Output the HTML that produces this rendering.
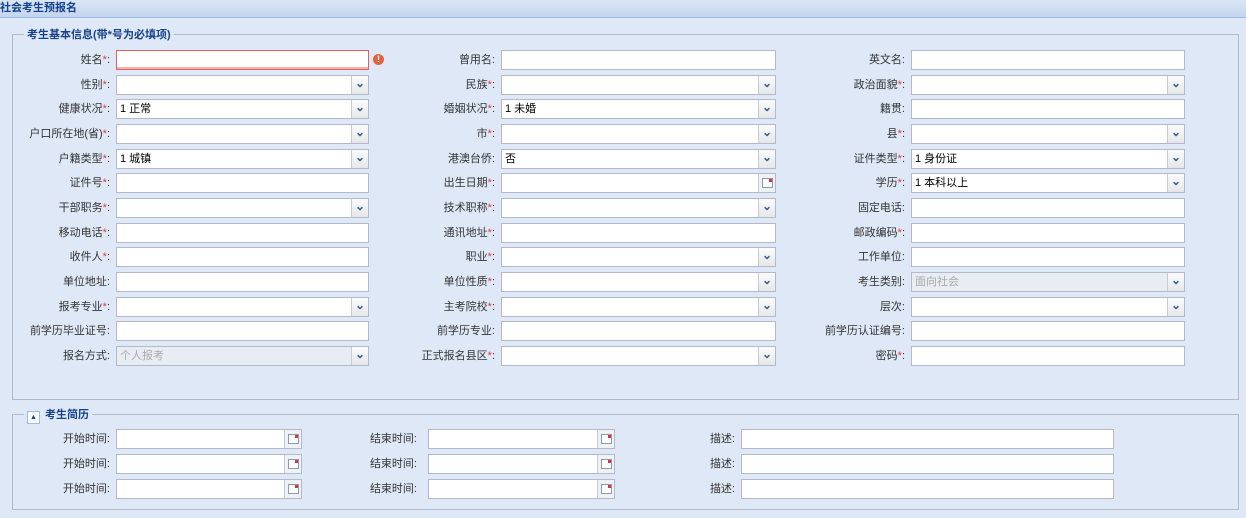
<!DOCTYPE html>
<html><head><meta charset="utf-8"><style>
body{margin:0;width:1246px;height:518px;background:#dfe8f6;font-family:"Liberation Sans","Noto Sans CJK SC",sans-serif;font-size:12px;color:#000;position:relative;overflow:hidden}
.hd{position:absolute;left:0;top:0;width:1246px;height:17px;background:linear-gradient(#dae6f4,#c3d6ef);border-bottom:1px solid #99bbe8;color:#15428b;font-weight:bold;font-size:11px;line-height:17px;padding-left:0}
.fs{position:absolute;border:1px solid #b5b8c8;}
.lg{position:absolute;background:#dfe8f6;color:#15428b;font-weight:bold;font-size:11px;padding:0 3px;line-height:14px}
.l{position:absolute;text-align:right;height:20px;line-height:20px;font-size:11px;color:#333}
.l i{font-style:normal;color:#e4393c}
.f{position:absolute;height:18px;border:1px solid #b5b8c8;background:#fff;line-height:18px;padding-left:3px;box-sizing:content-box;font-size:11px}
.tr{position:absolute;right:0;top:0;width:16px;height:18px;background:linear-gradient(#fbfbfb,#e5e7ea);border-left:1px solid #c8cbd2;color:#3a5d8f;font-size:12px;font-weight:bold;text-align:center;line-height:14px}
.d{color:#aaa;background:#e8edf4!important}
</style></head><body>
<div class="hd">社会考生预报名</div>
<div class="fs" style="left:12px;top:34px;width:1225px;height:364px"></div>
<div class="lg" style="left:24px;top:28px">考生基本信息(带*号为必填项)</div>
<div class="fs" style="left:12px;top:414px;width:1225px;height:94px"></div>
<div class="lg" style="left:24px;top:408px"><span style="display:inline-block;width:11px;height:11px;border:1px solid #99bbe8;background:#fff;font-size:7px;text-align:center;line-height:11px;vertical-align:-1px;margin-right:5px">▲</span>考生简历</div>

<div id="rows"></div>
<script>
var rows=[
[["姓名",1,"t","","err"],["曾用名",0,"t",""],["英文名",0,"t",""]],
[["性别",1,"c",""],["民族",1,"c",""],["政治面貌",1,"c",""]],
[["健康状况",1,"c","1 正常"],["婚姻状况",1,"c","1 未婚"],["籍贯",0,"t",""]],
[["户口所在地(省)",1,"c",""],["市",1,"c",""],["县",1,"c",""]],
[["户籍类型",1,"c","1 城镇"],["港澳台侨",0,"c","否"],["证件类型",1,"c","1 身份证"]],
[["证件号",1,"t",""],["出生日期",1,"d",""],["学历",1,"c","1 本科以上"]],
[["干部职务",1,"c",""],["技术职称",1,"c",""],["固定电话",0,"t",""]],
[["移动电话",1,"t",""],["通讯地址",1,"t",""],["邮政编码",1,"t",""]],
[["收件人",1,"t",""],["职业",1,"c",""],["工作单位",0,"t",""]],
[["单位地址",0,"t",""],["单位性质",1,"c",""],["考生类别",0,"c","面向社会","dis"]],
[["报考专业",1,"c",""],["主考院校",1,"c",""],["层次",0,"c",""]],
[["前学历毕业证号",0,"t",""],["前学历专业",0,"t",""],["前学历认证编号",0,"t",""]],
[["报名方式",0,"c","个人报考","dis"],["正式报名县区",1,"c",""],["密码",1,"t",""]]];
var cols=[[110,116,252],[495,501,274],[905,911,273]];
var h="";
var CAL='<div class="tr" style="background:#eef1f6"><span style="display:inline-block;width:9px;height:8px;border:1px solid #8a9ab0;background:#fff;margin-top:4px;position:relative"><span style="position:absolute;right:0;top:0;width:3px;height:3px;background:#d33"></span></span></div>';
rows.forEach(function(r,i){var yy=50+i*24.67;
r.forEach(function(c,j){var L=cols[j];
h+='<div class="l" style="left:'+(L[0]-110)+'px;width:110px;top:'+yy+'px">'+c[0]+(c[1]?'<i>*</i>':'')+':</div>';
var st=c[4]=="err"?'border-color:#e06060;background:#fff linear-gradient(0deg,#f6b0b0 0,#f6b0b0 2px,#fff 2px);':'';
var cls='f'+(c[4]=="dis"?' d':'');
h+='<div class="'+cls+'" style="left:'+L[1]+'px;top:'+yy+'px;width:'+(L[2]-4)+'px;'+st+'">'+c[3];
if(c[2]=="c")h+='<div class="tr">&#8964;</div>';
if(c[2]=="d")h+=CAL;
h+='</div>';
if(c[4]=="err")h+='<div style="position:absolute;left:373px;top:'+(yy+4)+'px;width:11px;height:11px;border-radius:50%;background:#e8603c;color:#fff;font-size:9px;font-weight:bold;text-align:center;line-height:11px">!</div>';
});});
for(var k=0;k<3;k++){var yy=429+k*25;
h+='<div class="l" style="left:0;width:110px;top:'+yy+'px">开始时间:</div><div class="f" style="left:116px;top:'+yy+'px;width:181px">'+CAL+'</div>';
h+='<div class="l" style="left:310px;width:107px;top:'+yy+'px">结束时间:</div><div class="f" style="left:428px;top:'+yy+'px;width:182px">'+CAL+'</div>';
h+='<div class="l" style="left:640px;width:95px;top:'+yy+'px">描述:</div><div class="f" style="left:741px;top:'+yy+'px;width:368px"></div>';}
document.getElementById("rows").innerHTML=h;
</script>
</body></html>
